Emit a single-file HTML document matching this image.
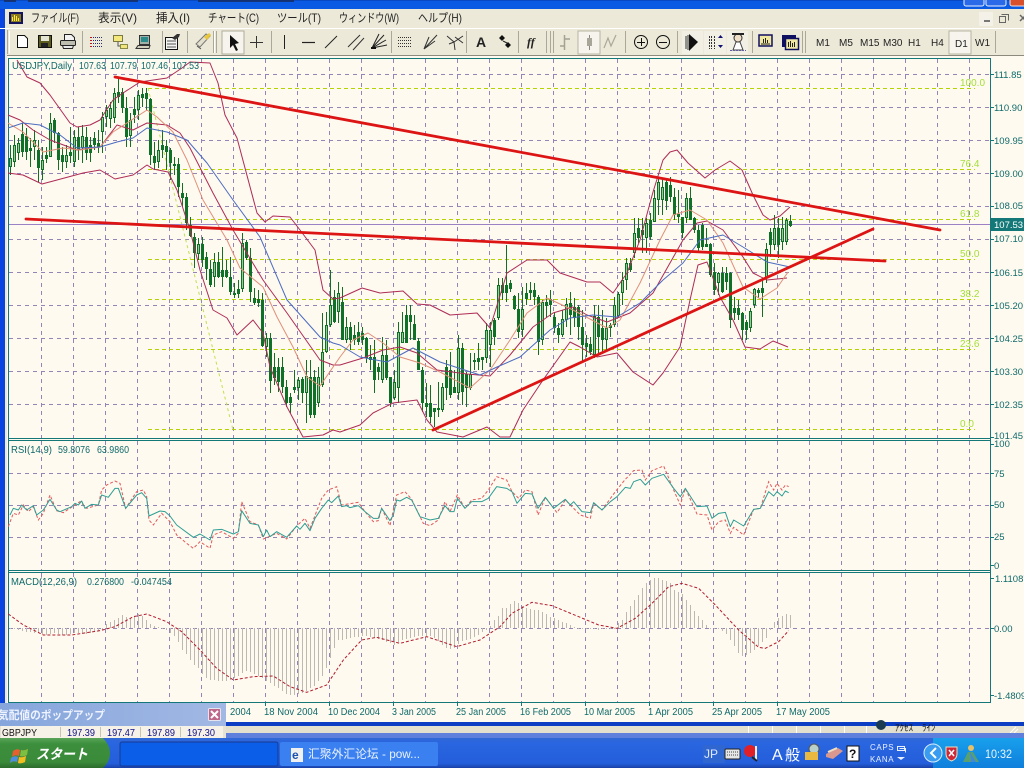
<!DOCTYPE html>
<html lang="ja"><head><meta charset="utf-8"><title>MT4 USDJPY Daily</title>
<style>
html,body{margin:0;padding:0;background:#ece9d8;width:1024px;height:768px;overflow:hidden}
svg{display:block;font-family:"Liberation Sans","Noto Sans CJK JP",sans-serif}
.m{font-size:12px;fill:#222}
.t{font-size:10px;fill:#0e6a6a}
.a{font-size:9.5px;fill:#0e6a6a}
.f{font-size:10px;fill:#a4e038}
.tf{font-size:10px;fill:#222}
.g{stroke:#9584b6;stroke-width:1;stroke-dasharray:4 4;fill:none}
.fb{stroke:#b4d400;stroke-width:1;stroke-dasharray:4 3;fill:none}
.sep{stroke:#aca899;stroke-width:1}
.v{font-size:10.500px;fill:#10108a}
.bb{fill:none;stroke:#ad2c56;stroke-width:1}
</style></head><body>
<svg width="1024" height="768" viewBox="0 0 1024 768" xmlns="http://www.w3.org/2000/svg">
<defs>
<linearGradient id="tb" x1="0" y1="0" x2="0" y2="1"><stop offset="0" stop-color="#3168d5"/><stop offset=".15" stop-color="#2a66e0"/><stop offset=".85" stop-color="#245edb"/><stop offset="1" stop-color="#1941a5"/></linearGradient>
<linearGradient id="st" x1="0" y1="0" x2="0" y2="1"><stop offset="0" stop-color="#5aa35a"/><stop offset=".2" stop-color="#3c8f3c"/><stop offset=".8" stop-color="#3a8a3a"/><stop offset="1" stop-color="#2c6c2c"/></linearGradient>
<linearGradient id="pt" x1="0" y1="0" x2="1" y2="0"><stop offset="0" stop-color="#86a6dc"/><stop offset="1" stop-color="#a2b8e4"/></linearGradient>
<linearGradient id="tr" x1="0" y1="0" x2="0" y2="1"><stop offset="0" stop-color="#18a0ec"/><stop offset="1" stop-color="#0f7fdc"/></linearGradient>
</defs>

<!-- window frame -->
<rect width="1024" height="768" fill="#ece9d8"/>
<rect x="0" y="0" width="1024" height="9" fill="#0a5ae4"/>
<rect x="0" y="0" width="1024" height="1" fill="#0848c0"/>
<path d="M4 0h12v2h-12zM28 0h110v2h-110zM198 0h96v2h-96z" fill="#1a2a58" opacity=".75"/>
<rect x="964" y="-4" width="20" height="10" rx="2" fill="#2a6ae8" stroke="#e8f0ff"/>
<rect x="986" y="-4" width="20" height="10" rx="2" fill="#2a6ae8" stroke="#e8f0ff"/>
<rect x="1010" y="-4" width="20" height="10" rx="2" fill="#d8502c" stroke="#f0e0e0"/>
<rect x="0" y="9" width="5" height="713" fill="#0a44e0"/>
<rect x="5" y="9" width="2" height="713" fill="#ece9d8"/>

<!-- menu -->
<rect x="9" y="12" width="14" height="12" fill="#14145c"/>
<rect x="11" y="14" width="10" height="8" fill="#8a7a20"/>
<path d="M12.500 21V17M14.500 21V15M16.500 21V16M18.500 21V18" stroke="#ffe840" fill="none"/>
<text class="m" x="31" y="22" textLength="48" lengthAdjust="spacingAndGlyphs">ファイル(F)</text>
<text class="m" x="98" y="22" textLength="39" lengthAdjust="spacingAndGlyphs">表示(V)</text>
<text class="m" x="156" y="22" textLength="34" lengthAdjust="spacingAndGlyphs">挿入(I)</text>
<text class="m" x="208" y="22" textLength="51" lengthAdjust="spacingAndGlyphs">チャート(C)</text>
<text class="m" x="277" y="22" textLength="44" lengthAdjust="spacingAndGlyphs">ツール(T)</text>
<text class="m" x="339" y="22" textLength="60" lengthAdjust="spacingAndGlyphs">ウィンドウ(W)</text>
<text class="m" x="418" y="22" textLength="44" lengthAdjust="spacingAndGlyphs">ヘルプ(H)</text>
<rect x="979" y="12" width="14" height="14" fill="#f4f2e8"/>
<rect x="984" y="20" width="6" height="2" fill="#777"/>
<path d="M1001.500 14.500h7v6M999.500 16.500h6v6h-6z" fill="none" stroke="#666" stroke-width="1"/>
<path d="M1020 15l6 6M1026 15l-6 6" stroke="#666" stroke-width="1.500"/>
<path d="M0 28.500H1024" stroke="#fff"/>

<!-- toolbar -->
<rect x="8" y="29" width="1016" height="26" fill="#ece9d8"/>
<path d="M7.500 30V54" class="sep"/><path d="M9.500 31V53" stroke="#fff"/>
<!-- new -->
<path d="M17.500 35.500h7l3 3v9h-10z" fill="#fff" stroke="#111"/>
<!-- save -->
<rect x="38.500" y="35.500" width="13" height="12" fill="#5c5c1c" stroke="#111"/>
<rect x="41" y="36" width="8" height="5" fill="#e4e4d4"/><rect x="41" y="43" width="7" height="4" fill="#222"/>
<!-- print -->
<path d="M64.500 34.500h7l3 3v3h-10z" fill="#f2f2f2" stroke="#222"/>
<rect x="60.500" y="40.500" width="15" height="5" rx="1" fill="#bdbdb0" stroke="#222"/>
<path d="M62.500 45.500h11l-1 3h-9z" fill="#e8e8e8" stroke="#222"/>
<path d="M82.500 31V53" class="sep"/>
<!-- list -->
<path d="M90 37.500h2M90 40.500h2M90 43.500h2M90 46.500h2" stroke="#c01818" stroke-width="1"/>
<path d="M93 37.500h10M93 40.500h10M93 43.500h10M93 46.500h10" stroke="#2a2a70" stroke-dasharray="1 1"/>
<!-- folders -->
<rect x="113.500" y="35.500" width="9" height="6" fill="#f4e87c" stroke="#7a7a40"/>
<path d="M118 42v4h3" stroke="#555" fill="none"/>
<rect x="120.500" y="44.500" width="7" height="4" fill="#f0e47c" stroke="#8a8a48"/>
<!-- terminal -->
<rect x="139.500" y="35.500" width="10" height="9" fill="#9fb0a8" stroke="#333"/>
<rect x="141" y="37" width="7" height="5" fill="#2a8a8a"/>
<path d="M136 48.500h13l1-3h-12z" fill="#d0cebc" stroke="#333"/>
<path d="M162.500 31V53" class="sep"/>
<!-- properties -->
<rect x="165.500" y="37.500" width="12" height="12" fill="#f4f4f0" stroke="#111"/>
<path d="M167 41h9M167 44h9M167 47h9" stroke="#555"/>
<path d="M172 38l5-4 3 0 -1 3-4 3z" fill="#333"/>
<path d="M187.500 31V53" class="sep"/>
<!-- pen -->
<path d="M196 44l10-10 4 2-10 11z" fill="#e4e0cc" stroke="#777"/>
<path d="M204 37l5-4 2 2-4 5z" fill="#e8c838"/>
<path d="M197 46l4 3" stroke="#555"/>
<path d="M213.500 31V53M216.500 31V53" class="sep"/><path d="M214.500 31V53" stroke="#fff"/>
<!-- cursor pressed -->
<rect x="222" y="31" width="22" height="23" fill="#f6f4ec" stroke="#b0ac9c"/>
<path d="M230 35l0 13 3-3 3 6 2-1-3-6 4-1z" fill="#111"/>
<path d="M256.500 36V48M250 42.500H263" stroke="#333" fill="none"/>
<path d="M271.500 31V53" class="sep"/>
<path d="M284.500 35V49" stroke="#222"/>
<path d="M302 42.500h13" stroke="#222" stroke-width="1.200"/>
<path d="M325 48l12-12" stroke="#222"/>
<path d="M348 47l12-12M353 50l11-12" stroke="#333"/>
<path d="M372 48l12-13M372 48l14-8M372 48l15-3M372 48l7-14" stroke="#222"/><path d="M371 47h5v2h-5z" fill="#111"/>
<path d="M391.500 31V53" class="sep"/>
<path d="M398 37.500h14M398 40.500h14M398 43.500h14M398 46.500h14" stroke="#333" stroke-dasharray="1 1"/>
<path d="M424 49l13-14M424 49l11-8M424 49l5-12" stroke="#333"/>
<path d="M447 36l7 6 9-6M449 44l5-2 1 8M455 37l8 6" stroke="#333" fill="none"/>
<path d="M466.500 31V53" class="sep"/>
<text x="476" y="47" font-size="14" font-weight="bold" fill="#222">A</text>
<path d="M499 38l3-3 3 3-3 3zM505 45l3-3 3 3-3 3z" fill="#111"/><path d="M503 41l4 2" stroke="#222"/>
<path d="M518.500 31V53" class="sep"/>
<text x="527" y="46" font-size="12" font-family="Liberation Serif" font-style="italic" font-weight="bold" fill="#222">ff</text>
<path d="M546.500 31V53" class="sep"/><path d="M550.500 31V53M553.500 31V53" class="sep"/>
<!-- chart types -->
<path d="M564.500 35V50M560 46h4M565 39h5" stroke="#a4a294" stroke-width="1.500" fill="none"/>
<rect x="578" y="31" width="22" height="23" fill="#f6f4ec" stroke="#b8b4a4"/>
<path d="M589.500 35V50" stroke="#888"/><rect x="587" y="38" width="5" height="8" fill="#a8a698"/>
<path d="M604 48l4-10 3 8 5-11" stroke="#aaa89a" fill="none" stroke-width="1.200"/>
<path d="M625.500 31V53" class="sep"/>
<circle cx="641" cy="42" r="6.500" fill="none" stroke="#111"/><path d="M637 42.500h8M641.500 38v8" stroke="#111"/>
<circle cx="663" cy="42" r="6.500" fill="none" stroke="#111"/><path d="M659 42.500h8" stroke="#111"/>
<path d="M677.500 31V53" class="sep"/>
<rect x="682" y="31" width="21" height="23" fill="#f2f0e4"/>
<path d="M689 34l9 8-9 9z" fill="#111"/><path d="M686 36v13M688 35v15" stroke="#333"/>
<rect x="704" y="31" width="22" height="23" fill="#f2f0e4"/>
<path d="M709.500 36V49M711.500 36V49M714.500 36V49" stroke="#333" stroke-dasharray="2 1"/>
<path d="M718 38l5 0-2.500-3zM718 45l5 0-2.500 3z" fill="#101070"/>
<rect x="727" y="31" width="21" height="23" fill="#f2f0e4"/>
<circle cx="738" cy="38" r="4" fill="#f0e0c8" stroke="#333"/><path d="M732 35h12v-2h-12z" fill="#222"/>
<path d="M733 50l3-8h4l3 8z" fill="#fff" stroke="#444"/><path d="M730 50.500h16" stroke="#6060a0" stroke-dasharray="2 1"/>
<path d="M752.500 31V53" class="sep"/>
<rect x="759" y="35" width="13" height="11" fill="#f0e8a0" stroke="#101060" stroke-width="1.500"/>
<path d="M761 44h9" stroke="#222"/><path d="M763.500 43v-4M765.500 43v-5M767.500 43v-3" stroke="#222"/>
<rect x="782.500" y="35.500" width="13" height="11" fill="#101060" stroke="#101060"/>
<rect x="785.500" y="38.500" width="13" height="11" fill="#f0e8a0" stroke="#101060" stroke-width="1.500"/>
<path d="M788.500 47v-5M790.500 47v-6M792.500 47v-4M794.500 47v-5" stroke="#222"/>
<path d="M802.500 31V53M805.500 31V53" class="sep"/>
<text class="tf" x="816" y="46">M1</text>
<text class="tf" x="839" y="46">M5</text>
<text class="tf" x="860" y="46">M15</text>
<text class="tf" x="883" y="46">M30</text>
<text class="tf" x="908" y="46">H1</text>
<text class="tf" x="931" y="46">H4</text>
<rect x="949" y="31" width="22" height="23" fill="#f6f4ec" stroke="#b8b4a4"/>
<text class="tf" x="955" y="47">D1</text>
<text class="tf" x="975" y="46">W1</text>
<path d="M995.500 31V53" class="sep"/>
<path d="M7 55.500H1024" stroke="#8c8a7c"/>

<!-- chart area -->
<rect x="7" y="56" width="1017" height="666" fill="#fffaf0"/>
<g fill="none" stroke="#157878" stroke-width="1">
<path d="M8.500 58V703M8.500 58.500H990.500V702.500H8.500M8.500 438.500H990.500M8.500 440.500H990.500M8.500 570.500H990.500M8.500 572.500H990.500"/>
</g>

<!-- grid -->
<path class="g" d="M9 74.500H990M9 107.500H990M9 140.500H990M9 173.500H990M9 206.500H990M9 239.500H990M9 272.500H990M9 305.500H990M9 338.500H990M9 371.500H990M9 404.500H990M9 473.500H990M9 505.500H990M9 537.500H990M9 628.500H990"/>
<path class="g" d="M41.500 59V438M73.500 59V438M105.500 59V438M137.500 59V438M169.500 59V438M201.500 59V438M233.500 59V438M265.500 59V438M297.500 59V438M329.500 59V438M361.500 59V438M393.500 59V438M425.500 59V438M457.500 59V438M489.500 59V438M521.500 59V438M553.500 59V438M585.500 59V438M617.500 59V438M649.500 59V438M681.500 59V438M713.500 59V438M745.500 59V438M777.500 59V438M809.500 59V438M841.500 59V438M873.500 59V438M905.500 59V438M937.500 59V438M969.500 59V438"/>
<path class="g" d="M41.500 441V570M73.500 441V570M105.500 441V570M137.500 441V570M169.500 441V570M201.500 441V570M233.500 441V570M265.500 441V570M297.500 441V570M329.500 441V570M361.500 441V570M393.500 441V570M425.500 441V570M457.500 441V570M489.500 441V570M521.500 441V570M553.500 441V570M585.500 441V570M617.500 441V570M649.500 441V570M681.500 441V570M713.500 441V570M745.500 441V570M777.500 441V570M809.500 441V570M841.500 441V570M873.500 441V570M905.500 441V570M937.500 441V570M969.500 441V570"/>
<path class="g" d="M41.500 573V702M73.500 573V702M105.500 573V702M137.500 573V702M169.500 573V702M201.500 573V702M233.500 573V702M265.500 573V702M297.500 573V702M329.500 573V702M361.500 573V702M393.500 573V702M425.500 573V702M457.500 573V702M489.500 573V702M521.500 573V702M553.500 573V702M585.500 573V702M617.500 573V702M649.500 573V702M681.500 573V702M713.500 573V702M745.500 573V702M777.500 573V702M809.500 573V702M841.500 573V702M873.500 573V702M905.500 573V702M937.500 573V702M969.500 573V702"/>

<!-- fibonacci -->
<path class="fb" d="M148 88.500H975M148 169.500H975M148 219.500H975M148 259.500H975M148 299.500H975M148 349.500H975M148 429.500H975"/>
<path d="M148 88L233 430" fill="none" stroke="#c0e050" stroke-dasharray="3 3"/>
<text class="f" x="960" y="86">100.0</text>
<text class="f" x="960" y="167">76.4</text>
<text class="f" x="960" y="217">61.8</text>
<text class="f" x="960" y="257">50.0</text>
<text class="f" x="960" y="297">38.2</text>
<text class="f" x="960" y="347">23.6</text>
<text class="f" x="960" y="427">0.0</text>
<!-- bid line -->
<path d="M9 224.500H990" stroke="#9a82c4"/>

<!-- candles -->
<g transform="translate(.5 0)" fill="none">
<path stroke="#136f24" d="M10 145V175M14 135V167M18 138V160M22 123V157M26 128V160M30 138V167M34 130V160M38 140V182M42 147V180M46 147V163M50 113V157M54 118V143M58 132V170M62 147V172M66 145V168M70 127V163M74 130V167M78 127V160M82 125V163M86 127V160M90 137V162M94 132V150M98 130V153M102 112V153M106 105V127M110 102V128M114 88V123M118 77V103M122 88V113M126 97V147M130 113V147M134 97V123M138 90V120M142 88V107M146 88V110M150 98V165M154 142V170M158 140V168M162 130V158M166 140V170M170 148V180M174 157V175M178 158V197M182 183V207M186 193V230M190 217V237M194 233V268M198 238V260M202 237V267M206 252V280M210 260V287M214 253V287M218 252V278M222 247V287M226 260V278M230 257V295M234 283V298M238 280V298M242 233V292M246 240V260M250 248V302M254 288V305M258 290V307M262 293V347M266 333V357M270 333V393M274 353V385M278 358V392M282 357V393M286 380V407M290 393V413M294 370V393M298 377V400M302 377V403M306 360V423M310 360V418M314 370V418M318 367V407M322 313V387M326 312V353M330 270V327M334 290V323M338 282V323M342 287V340M346 317V343M350 322V350M354 325V345M358 322V345M362 327V345M366 337V363M370 345V370M374 340V393M378 363V380M382 337V383M386 340V380M390 377V407M394 370V400M398 322V403M402 312V343M406 305V343M410 305V340M414 315V340M418 338V370M422 367V412M426 383V417M430 385V423M434 408V427M438 382V417M442 383V412M446 360V400M450 352V398M454 370V393M458 335V400M462 343V405M466 372V407M470 353V390M474 353V370M478 343V370M482 357V370M486 323V363M490 322V367M494 318V345M498 278V320M502 278V300M506 245V302M510 280V292M514 295V310M518 293V338M522 287V337M526 283V305M530 282V300M534 283V305M538 295V355M542 300V345M546 295V318M550 290V317M554 312V333M558 323V343M562 310V337M566 298V327M570 292V335M574 298V327M578 305V340M582 310V362M586 335V357M590 337V355M594 305V358M598 305V355M602 310V352M606 318V352M610 323V337M614 297V327M618 292V317M622 272V305M626 258V290M630 258V272M634 218V258M638 218V243M642 218V253M646 218V253M650 213V240M654 190V222M658 178V215M662 180V215M666 178V210M670 177V202M674 188V220M678 190V223M682 217V238M686 193V223M690 187V220M694 217V233M698 225V253M702 223V250M706 228V247M710 243V277M714 263V295M718 272V295M722 267V293M726 267V290M730 272V328M734 297V320M738 300V320M742 312V340M746 320V340M750 308V332M754 288V308M758 288V298M762 278V317M766 243V283M770 228V257M774 215V250M778 218V258M782 217V250M786 218V245M790 215V227"/>
<path stroke="#0f7028" stroke-width="3" d="M10 158V167M14 145V162M18 143V153M22 134V152M26 136V152M30 148V151M34 140V147M38 150V168M42 160V170M46 155V159M50 123V157M54 120V133M58 133V160M62 155V162M66 155V162M70 152V156M74 137V162M78 137V150M82 136V148M86 137V153M90 145V153M94 138V145M98 143V147M102 117V132M106 110V117M110 108V119M114 93V118M118 92V97M122 92V108M126 108V137M130 120V136M134 109V115M138 95V110M142 94V98M146 93V99M150 99V155M154 156V163M158 150V162M162 145V150M166 146V152M170 150V163M174 164V166M178 164V187M182 193V198M186 197V223M190 225V236M194 237V253M198 244V254M202 244V260M206 257V269M210 269V285M214 262V277M218 262V277M222 270V277M226 270V277M230 277V292M234 293V295M238 289V294M242 243V289M246 242V258M250 258V292M254 298V303M258 299V303M262 300V346M266 338V347M270 338V381M274 367V378M278 367V382M282 367V387M286 387V403M290 397V403M294 387V390M298 380V388M302 379V393M306 376V393M310 377V415M314 377V415M318 377V403M322 352V385M326 325V352M330 305V325M334 297V322M338 293V312M342 302V340M346 327V340M350 327V340M354 335V340M358 332V342M362 333V340M366 338V358M370 357V360M374 357V380M378 367V372M382 355V380M386 355V378M390 377V403M394 382V398M398 332V388M402 332V343M406 315V343M410 315V322M414 324V340M418 341V370M422 370V403M426 403V407M430 403V417M434 408V412M438 408V410M442 387V410M446 367V388M450 370V395M454 387V393M458 348V393M462 348V392M466 374V388M470 374V388M474 360V362M478 358V362M482 357V360M486 330V358M490 330V345M494 320V337M498 285V318M502 285V293M506 285V293M510 283V289M514 296V309M518 309V332M522 309V330M526 293V299M530 290V293M534 290V297M538 297V342M542 302V340M546 302V306M550 299V305M554 317V328M558 328V335M562 319V335M566 304V320M570 303V315M574 307V318M578 307V327M582 327V345M586 343V347M590 344V352M594 316V355M598 317V337M602 328V340M606 328V340M610 325V328M614 305V325M618 294V316M622 280V293M626 263V280M630 263V270M634 233V253M638 228V238M642 230V235M646 223V238M650 220V237M654 198V222M658 182V200M662 187V200M666 182V201M670 185V197M674 197V215M678 214V217M682 217V233M686 198V218M690 198V220M694 218V230M698 230V248M702 225V247M706 244V247M710 244V275M714 272V290M718 273V283M722 273V292M726 273V282M730 273V320M734 308V313M738 308V315M742 313V330M746 322V330M750 311V328M754 289V305M758 290V293M762 288V293M766 249V278M770 232V245M774 228V245M778 228V245M782 228V242M786 220V242M790 221V226"/>
<path stroke="#9cc898" stroke-width="1" d="M10 159V166M14 146V161M18 144V152M34 141V146M42 161V169M50 124V156M66 156V161M74 138V161M82 137V147M102 118V131M106 111V116M110 109V118M114 94V117M130 121V135M138 96V109M158 151V161M198 245V253M214 263V276M242 244V288M266 339V346M298 381V387M306 377V392M318 378V402M322 353V384M326 326V351M330 306V324M338 294V311M346 328V339M382 356V379M394 383V397M398 333V387M402 333V342M442 388V409M458 349V392M470 375V387M486 331V357M490 331V344M498 286V317M522 310V329M542 303V339M562 320V334M566 305V319M594 317V354M606 329V339M614 306V324M618 295V315M622 281V292M626 264V279M634 234V252M646 224V237M654 199V221M658 183V199M662 188V199M686 199V217M718 274V282M750 312V327M754 290V304M766 250V277M774 229V244M782 229V241M786 221V241"/>
</g>

<!-- Bollinger + MA -->
<path class="bb" stroke-linejoin="round" d="M17 60L27 77L40 83L50 95L70 123L77 127L90 125L100 120L113 100L123 93L140 82L167 78L182 68L190 62L210 63L218 83L225 115L237 138L257 213L265 222L273 216L290 217L300 230L315 250L323 290L333 299L340 298L362 288L380 293L403 291L417 304L430 305L450 315L477 313L490 328L507 273L527 260L547 260L560 273L587 282L600 282L613 293L627 273L640 240L653 192L663 160L670 152L677 150L688 163L705 178L715 170L730 161L742 170L753 195L763 215L770 220L780 216L790 207"/>
<path class="bb" stroke-linejoin="round" d="M8 173L23 175L42 184L57 180L83 173L100 170L115 179L133 175L147 165L153 169L168 172L177 190L190 230L200 270L213 310L227 318L237 335L253 320L263 333L270 367L287 407L303 437L323 435L333 430L340 432L360 425L373 413L393 403L417 400L427 420L437 432L463 437L487 427L500 437L510 437L523 410L543 380L570 342L580 347L597 357L617 353L633 372L653 385L663 373L680 347L690 300L698 265L707 262L710 270L720 297L733 320L745 347L760 349L773 341L788 347"/>
<path class="bb" stroke-linejoin="round" d="M8 115L20 120L33 130L50 140L77 150L100 147L117 125L133 130L147 123L167 125L180 133L190 148L213 193L233 230L263 280L287 313L320 360L333 365L340 365L363 358L383 350L400 347L417 353L437 370L467 374L490 376L510 355L533 327L553 313L573 307L587 315L607 322L630 313L653 293L670 263L683 240L697 223L707 221L723 230L743 257L753 273L767 280L787 278"/>
<path fill="none" stroke="#e08f78" stroke-linejoin="round" d="M8 123L23 132L43 152L63 148L80 150L100 147L113 132L127 123L147 110L157 117L173 132L187 160L203 200L227 240L240 268L263 287L277 317L293 347L307 377L320 386L340 357L353 340L368 333L383 343L400 357L420 363L440 372L470 388L490 370L510 340L527 313L547 298L573 310L607 328L620 320L640 283L660 240L673 215L690 210L707 220L723 243L743 287L760 299L777 288L788 272"/>
<path fill="none" stroke="#4c6cc0" stroke-linejoin="round" d="M8 128L23 123L40 125L60 135L77 148L100 147L117 142L133 138L147 128L167 132L187 140L207 163L233 200L260 237L287 300L320 337L333 343L340 345L360 357L387 362L413 348L440 362L480 375L497 367L520 357L550 330L570 318L593 315L617 317L640 303L663 280L683 263L700 240L723 235L743 247L767 262L790 267"/>

<!-- trendlines -->
<g stroke="#dc1414" stroke-width="2.800" stroke-linecap="round" fill="none">
<path d="M115 77L940 230"/>
<path d="M26 219L885 261"/>
<path d="M433 430L873 229"/>
</g>

<!-- price axis -->
<rect x="991" y="57" width="33" height="646" fill="#fffaf0"/>
<g stroke="#157878"><path d="M991 74.500h3M991 107.500h3M991 140.500h3M991 173.500h3M991 206.500h3M991 239.500h3M991 272.500h3M991 305.500h3M991 338.500h3M991 371.500h3M991 404.500h3M991 437.500h3M991 444.500h3M991 473.500h3M991 505.500h3M991 537.500h3M991 565.500h3M991 578.500h3M991 628.500h3M991 695.500h3"/></g>
<g>
<text class="a" x="994" y="78">111.85</text>
<text class="a" x="994" y="111">110.90</text>
<text class="a" x="994" y="144">109.95</text>
<text class="a" x="994" y="177">109.00</text>
<text class="a" x="994" y="209">108.05</text>
<text class="a" x="994" y="242">107.10</text>
<text class="a" x="994" y="276">106.15</text>
<text class="a" x="994" y="309">105.20</text>
<text class="a" x="994" y="342">104.25</text>
<text class="a" x="994" y="375">103.30</text>
<text class="a" x="994" y="408">102.35</text>
<text class="a" x="994" y="439">101.45</text>
<text class="a" x="994" y="447">100</text>
<text class="a" x="994" y="477">75</text>
<text class="a" x="994" y="508">50</text>
<text class="a" x="994" y="540">25</text>
<text class="a" x="994" y="569">0</text>
<text class="a" x="995" y="582">1.11087</text>
<text class="a" x="994" y="632">0.00</text>
<text class="a" x="994" y="699">-1.4809</text>
</g>
<rect x="991" y="218" width="33" height="13" fill="#157878"/>
<text x="994" y="228" font-size="9.500" fill="#fff">107.53</text>

<text class="t" x="12" y="69" textLength="60" lengthAdjust="spacingAndGlyphs">USDJPY,Daily</text>
<text class="t" x="79" y="69" textLength="27" lengthAdjust="spacingAndGlyphs">107.63</text>
<text class="t" x="110" y="69" textLength="27" lengthAdjust="spacingAndGlyphs">107.79</text>
<text class="t" x="141" y="69" textLength="27" lengthAdjust="spacingAndGlyphs">107.46</text>
<text class="t" x="172" y="69" textLength="27" lengthAdjust="spacingAndGlyphs">107.53</text>

<!-- RSI -->
<g transform="translate(0 440) scale(.33333)">
<path fill="none" stroke="#e05a5a" stroke-width="3" stroke-dasharray="9 6" d="M25 260L40 220L55 225L70 195L85 215L100 200L115 240L130 220L150 165L170 212L190 218L220 198L240 185L260 205L295 195L305 150L320 135L345 123L360 130L377 205L410 155L430 150L440 170L447 240L460 255L485 220L510 245L530 285L560 310L580 325L600 305L630 325L640 285L665 275L700 295L715 280L725 185L750 245L775 255L790 297L830 280L860 297L890 258L915 235L930 265L965 175L985 150L1010 140L1025 195L1075 187L1095 215L1120 245L1135 242L1145 205L1170 257L1190 165L1215 155L1235 178L1270 250L1290 257L1315 240L1335 185L1350 215L1372 165L1395 205L1415 180L1445 175L1465 150L1490 110L1520 120L1536 155L1556 175L1576 150L1596 155L1614 225L1636 172L1671 218L1696 180L1711 195L1741 225L1771 235L1781 190L1806 210L1846 155L1876 118L1901 92L1926 90L1936 120L1956 92L1991 78L2021 150L2041 195L2056 145L2091 222L2121 225L2136 270L2156 245L2176 240L2191 280L2201 262L2231 285L2261 208L2281 205L2306 125L2321 150L2331 130L2346 150L2356 135L2366 140"/>
<path fill="none" stroke="#2e9e94" stroke-width="3" stroke-linejoin="round" d="M30 225L40 205L55 210L65 195L80 210L100 197L110 225L130 210L150 178L170 210L180 215L215 200L225 190L235 195L245 183L255 205L275 193L295 195L305 165L325 172L345 145L355 145L377 205L410 165L425 158L440 175L447 228L480 213L495 215L510 228L530 255L580 292L600 282L630 300L640 270L665 268L700 282L715 275L725 212L750 250L775 255L790 290L800 270L810 290L830 275L860 292L890 258L900 268L915 250L930 272L945 235L965 205L985 180L995 188L1015 168L1025 200L1040 197L1050 203L1075 197L1095 215L1120 235L1135 235L1145 205L1170 242L1180 225L1190 180L1200 183L1220 172L1235 180L1260 230L1290 240L1315 235L1335 197L1350 215L1362 215L1372 175L1395 205L1415 185L1445 185L1465 175L1490 140L1520 145L1536 155L1551 190L1576 160L1596 162L1614 205L1636 172L1661 205L1696 178L1711 195L1721 185L1746 215L1771 218L1781 188L1806 210L1831 185L1851 170L1876 142L1891 145L1901 125L1921 118L1936 135L1956 115L1991 103L2021 145L2041 170L2056 145L2091 200L2121 198L2136 235L2156 220L2176 217L2191 260L2201 240L2231 258L2261 208L2281 205L2306 155L2321 168L2331 155L2346 168L2356 153L2366 158"/>
</g>
<text class="t" x="11" y="453" textLength="41" lengthAdjust="spacingAndGlyphs">RSI(14,9)</text>
<text class="t" x="58" y="453" textLength="32" lengthAdjust="spacingAndGlyphs">59.8076</text>
<text class="t" x="97" y="453" textLength="32" lengthAdjust="spacingAndGlyphs">63.9860</text>

<!-- MACD histogram -->
<g transform="translate(.5 0)">
<path fill="none" stroke="#bcbab0" d="M10 628v1M14 628v1M18 628v2M22 628v3M26 628v4M30 628v4M34 628v5M38 628v5M42 628v6M46 628v7M50 628v6M54 628v5M58 628v6M62 628v7M66 628v7M70 628v6M74 628v5M78 628v5M82 628v6M86 628v6M90 628v5M94 628v4M98 628v3M102 628v2M106 628v-4M110 628v-6M114 628v-8M118 628v-10M122 628v-13M126 628v-11M130 628v-10M134 628v-12M138 628v-14M142 628v-12M146 628v-8M150 628v-4M154 628v-2M158 628v-1M162 628v1M166 628v2M170 628v5M174 628v8M178 628v14M182 628v22M186 628v26M190 628v32M194 628v37M198 628v40M202 628v46M206 628v50M210 628v52M214 628v52M218 628v53M222 628v53M226 628v53M230 628v52M234 628v50M238 628v48M242 628v45M246 628v43M250 628v44M254 628v46M258 628v48M262 628v50M266 628v53M270 628v55M274 628v58M278 628v60M282 628v63M286 628v66M290 628v67M294 628v67M298 628v66M302 628v65M306 628v63M310 628v60M314 628v58M318 628v53M322 628v48M326 628v40M330 628v30M334 628v20M338 628v12M342 628v12M346 628v11M350 628v10M354 628v9M358 628v9M362 628v8M366 628v8M370 628v9M374 628v10M378 628v11M382 628v12M386 628v14M390 628v15M394 628v17M398 628v14M402 628v12M406 628v11M410 628v10M414 628v9M418 628v8M422 628v8M426 628v8M430 628v8M434 628v10M438 628v13M442 628v17M446 628v20M450 628v21M454 628v20M458 628v16M462 628v13M466 628v12M470 628v11M474 628v9M478 628v7M482 628v4M486 628v2M490 628v-2M494 628v-8M498 628v-12M502 628v-20M506 628v-20M510 628v-24M514 628v-27M518 628v-25M522 628v-22M526 628v-20M530 628v-19M534 628v-18M538 628v-18M542 628v-16M546 628v-14M550 628v-11M554 628v-10M558 628v-8M562 628v-6M566 628v-5M570 628v-3M574 628v-1M578 628v1M582 628v1M586 628v1M590 628v1M594 628v1M598 628v2M602 628v1M606 628v1M610 628v1M614 628v1M618 628v-5M622 628v-8M626 628v-16M630 628v-22M634 628v-28M638 628v-33M642 628v-40M646 628v-45M650 628v-48M654 628v-50M658 628v-50M662 628v-48M666 628v-47M670 628v-45M674 628v-38M678 628v-36M682 628v-34M686 628v-28M690 628v-23M694 628v-17M698 628v-12M702 628v-8M706 628v-3M710 628v1M714 628v1M718 628v1M722 628v3M726 628v6M730 628v12M734 628v18M738 628v25M742 628v28M746 628v27M750 628v25M754 628v22M758 628v18M762 628v14M766 628v10M770 628v2M774 628v-6M778 628v-10M782 628v-12M786 628v-14M790 628v-13"/>
</g>
<g transform="translate(0 440) scale(.33333)">
<path fill="none" stroke="#b01c2c" stroke-width="3" stroke-dasharray="9 6" d="M25 522L70 555L130 585L215 585L300 572L345 560L400 530L440 522L500 545L545 575L600 630L650 685L700 720L760 710L820 708L870 740L920 757L980 735L1030 660L1085 600L1130 592L1200 610L1280 590L1370 620L1440 600L1500 560L1536 520L1596 487L1656 497L1736 530L1796 555L1851 565L1906 535L1956 490L2006 440L2046 430L2096 445L2146 495L2216 570L2276 622L2296 625L2336 605L2366 572"/>
</g>
<text class="t" x="11" y="585" textLength="66" lengthAdjust="spacingAndGlyphs">MACD(12,26,9)</text>
<text class="t" x="87" y="585" textLength="37" lengthAdjust="spacingAndGlyphs">0.276800</text>
<text class="t" x="131" y="585" textLength="41" lengthAdjust="spacingAndGlyphs">-0.047454</text>

<!-- time axis -->
<path d="M265.500 703v3M329.500 703v3M393.500 703v3M457.500 703v3M521.500 703v3M585.500 703v3M649.500 703v3M713.500 703v3M777.500 703v3" stroke="#157878"/>
<g>
<text class="t" x="230" y="715" textLength="21" lengthAdjust="spacingAndGlyphs">2004</text>
<text class="t" x="264" y="715" textLength="54" lengthAdjust="spacingAndGlyphs">18 Nov 2004</text>
<text class="t" x="328" y="715" textLength="52" lengthAdjust="spacingAndGlyphs">10 Dec 2004</text>
<text class="t" x="392" y="715" textLength="44" lengthAdjust="spacingAndGlyphs">3 Jan 2005</text>
<text class="t" x="456" y="715" textLength="50" lengthAdjust="spacingAndGlyphs">25 Jan 2005</text>
<text class="t" x="520" y="715" textLength="51" lengthAdjust="spacingAndGlyphs">16 Feb 2005</text>
<text class="t" x="584" y="715" textLength="51" lengthAdjust="spacingAndGlyphs">10 Mar 2005</text>
<text class="t" x="648" y="715" textLength="45" lengthAdjust="spacingAndGlyphs">1 Apr 2005</text>
<text class="t" x="712" y="715" textLength="50" lengthAdjust="spacingAndGlyphs">25 Apr 2005</text>
<text class="t" x="776" y="715" textLength="54" lengthAdjust="spacingAndGlyphs">17 May 2005</text>
</g>

<!-- bottom bands -->
<rect x="0" y="722" width="1024" height="4" fill="#0a3cc4"/>
<rect x="0" y="726" width="1024" height="7" fill="#e4e0d0"/>
<path d="M748.500 726v7M772.500 726v7M796.500 726v7M820.500 726v7M844.500 726v7M866.500 726v7" stroke="#fff"/>
<circle cx="881" cy="725" r="5" fill="#1a3a50"/>
<text x="895" y="731" font-size="9" fill="#111">ｱｸｾｽ　ﾗｲﾝ</text>
<path d="M1010 733l6-6M1014 733l4-4" stroke="#fff"/>
<rect x="0" y="733" width="1024" height="5" fill="#5f7fdc"/>

<!-- popup -->
<rect x="0" y="703" width="226" height="35" fill="#e6e2d4"/>
<rect x="0" y="703" width="226" height="23" fill="url(#pt)"/>
<text x="-2" y="719" font-size="11.500" font-weight="bold" fill="#eef3ff" textLength="107" lengthAdjust="spacingAndGlyphs">気配値のポップアップ</text>
<rect x="208.500" y="708.500" width="12" height="12" rx="1" fill="#c0688a" stroke="#e4e4f0"/>
<path d="M211 711l7 7M218 711l-7 7" stroke="#fff" stroke-width="2"/>
<rect x="1" y="726" width="222" height="12" fill="#f7f2e8"/>
<text x="2" y="736" font-size="10.500" fill="#111" textLength="35" lengthAdjust="spacingAndGlyphs">GBPJPY</text>
<text class="v" x="67" y="736" textLength="28" lengthAdjust="spacingAndGlyphs">197.39</text>
<text class="v" x="107" y="736" textLength="28" lengthAdjust="spacingAndGlyphs">197.47</text>
<text class="v" x="147" y="736" textLength="28" lengthAdjust="spacingAndGlyphs">197.89</text>
<text class="v" x="187" y="736" textLength="28" lengthAdjust="spacingAndGlyphs">197.30</text>
<path d="M60.500 727v10M100.500 727v10M140.500 727v10M180.500 727v10" stroke="#c8c4b4"/>

<!-- taskbar -->
<rect x="0" y="738" width="1024" height="30" fill="url(#tb)"/>
<path d="M0 738H103Q110 745 110 753Q110 762 103 768H0z" fill="url(#st)"/>
<path d="M13 751q4-3 7-1l-1 6q-4-2-7 1zM21 750q3 1 7-1l-1 6q-4 2-7 1zM11 758q4-3 7-1l-1 5q-4-2-7 1zM19 757q3 1 7-1l-1 6q-4 2-7 1z" fill="#e86030"/>
<path d="M21 750q3 1 7-1l-1 6q-4 2-7 1z" fill="#7cc040"/><path d="M11 758q4-3 7-1l-1 5q-4-2-7 1z" fill="#4a90e0"/><path d="M19 757q3 1 7-1l-1 6q-4 2-7 1z" fill="#f0c020"/>
<text x="36" y="759" font-size="14" font-weight="bold" font-style="italic" fill="#fff" textLength="52" lengthAdjust="spacingAndGlyphs">スタート</text>
<rect x="120" y="742" width="158" height="24" rx="2" fill="#0a5ee8" stroke="#1a3a90"/>
<rect x="280" y="742" width="158" height="24" rx="2" fill="#3a80f0"/>
<rect x="291" y="748" width="12" height="14" fill="#f0f0f0"/>
<text x="292" y="759" font-size="12" font-weight="bold" fill="#1a50b0">e</text>
<text x="308" y="758" font-size="12" fill="#eaf2ff" textLength="112" lengthAdjust="spacingAndGlyphs">汇聚外汇论坛 - pow...</text>

<!-- tray -->
<rect x="703" y="745" width="22" height="18" fill="#2f66d0"/>
<text x="704" y="758" font-size="12" fill="#dfe8ff">JP</text>
<rect x="725" y="749" width="15" height="10" rx="1" fill="#e6e6e6" stroke="#222"/><path d="M727 752h11M727 755h11" stroke="#444" stroke-dasharray="1 1"/>
<circle cx="750" cy="751" r="6" fill="#e02028"/><path d="M756 746v14" stroke="#eee" stroke-width="2"/><path d="M752 757l5 4" stroke="#222" stroke-width="2"/>
<text x="772" y="760" font-size="16" fill="#fff">A</text><text x="785" y="760" font-size="15" fill="#fff">般</text>
<circle cx="814" cy="749" r="5" fill="#b8d0c8" stroke="#555"/><rect x="805" y="752" width="13" height="8" fill="#e8b840"/>
<path d="M826 754l12-6 5 3-10 8-7-2z" fill="#d89890"/><path d="M828 752l9-4" stroke="#f0e0c0" stroke-width="2"/>
<rect x="847" y="746" width="12" height="15" fill="#fff" stroke="#111"/><text x="849" y="758" font-size="12" font-weight="bold" fill="#111">?</text>
<text x="870" y="750" font-size="8" fill="#e8f0ff" letter-spacing=".6">CAPS</text>
<text x="870" y="762" font-size="8" fill="#e8f0ff" letter-spacing=".6">KANA</text>
<path d="M897.500 746.500h7v4h-7zM899.500 748.500h6v4" fill="none" stroke="#e8f0ff"/>
<path d="M897 757h8l-4 3z" fill="#e8f0ff"/>
<path d="M933 738H1024V768H933z" fill="url(#tr)"/>
<circle cx="933" cy="753" r="9" fill="#3a9cf0" stroke="#d8ecff"/>
<path d="M936 748l-5 5 5 5" fill="none" stroke="#fff" stroke-width="2"/>
<path d="M946 747h11v7q0 5-5.500 7q-5.500-2-5.500-7z" fill="#d02838" stroke="#e8e0c0"/><path d="M949 750l5 6M954 750l-5 6" stroke="#fff" stroke-width="1.500"/>
<circle cx="971" cy="748" r="3" fill="#e8c068"/><path d="M963 762l5-10h5l6 10z" fill="#58a070"/><path d="M970 752l6 10h-5z" fill="#4088d8"/>
<text x="985" y="758" font-size="12" fill="#eaf4ff" textLength="27" lengthAdjust="spacingAndGlyphs">10:32</text>
</svg>
</body></html>
